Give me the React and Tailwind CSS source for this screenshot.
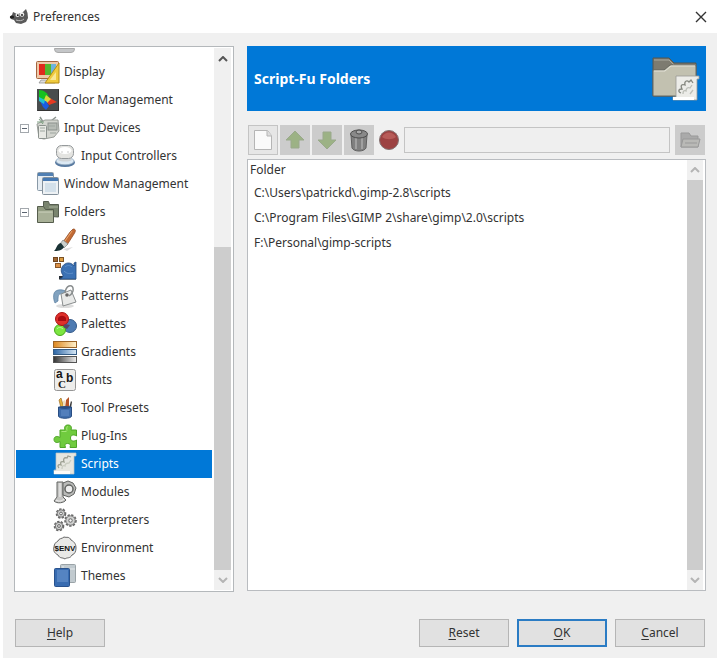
import React from "react";

function Svg({ size = 24, children, className = "" }) {
  return (
    <svg width={size} height={size} viewBox="0 0 24 24" className={`shrink-0 ${className}`} fill="none" aria-hidden="true">
      {children}
    </svg>
  );
}

const Wilber = () => (
  <svg width="20" height="18" viewBox="0 0 20 18" className="shrink-0" aria-hidden="true">
    <path d="M4 4l4 2 5-1 4-4 1.500 4 .5 5-2 4-5 2-5-1-2-3-3-1-1-2 2-2z" fill="#5a5a5a" />
    <circle cx="8.500" cy="7" r="2" fill="#eee" />
    <circle cx="13" cy="6.500" r="2.200" fill="#eee" />
    <circle cx="8.800" cy="7.200" r="0.900" fill="#111" />
    <circle cx="13" cy="7" r="0.900" fill="#111" />
    <ellipse cx="3" cy="9" rx="2.200" ry="1.600" fill="#222" />
    <path d="M7 12c3 1 6 1 8-1" stroke="#bbb" fill="none" />
  </svg>
);

const DisplayIcon = () => (
  <Svg>
    <path d="M5 20h12l2 3H3z" fill="#ddd" stroke="#888" strokeWidth="0.700" />
    <rect x="0.500" y="1.500" width="22" height="17" rx="1" fill="#eec9a8" stroke="#a5653f" />
    <rect x="3" y="4" width="6" height="11" fill="#e02a1c" />
    <rect x="9" y="4" width="6" height="11" fill="#54b82e" />
    <rect x="15" y="4" width="5" height="11" fill="#6db4dd" />
    <path d="M23 3v20H9z" fill="#efcb3e" stroke="#b48b16" />
    <path d="M20 12v8h-6z" fill="#f9e797" />
  </Svg>
);

const ColorIcon = () => (
  <Svg>
    <rect x="1" y="1" width="22" height="22" fill="#494d4e" />
    <path d="M3 2c5 0 9 3 10 8l-4 4-6-2z" fill="#16c11f" />
    <path d="M12 9l9 5-8 3-3-4z" fill="#e63b22" />
    <path d="M10 7l5 4-4 4-3-3z" fill="#d8d83c" />
    <path d="M4 13l6 0 3 5-3 4-3-3z" fill="#1c5ce0" />
    <path d="M3 9l6 3-1 4-5-3z" fill="#22c3cf" />
    <path d="M1.500 22.500h21v-21" stroke="#333" />
  </Svg>
);

const DevicesIcon = () => (
  <Svg>
    <path d="M7 6L4 1M15 5l5-4" stroke="#8c9590" strokeWidth="1.500" />
    <path d="M1 8l8-4h13l1 11-5 6-10 2-5-1z" fill="#d3d5cf" stroke="#999d98" />
    <rect x="2.500" y="9.500" width="8" height="13" rx="1" fill="#e8e9e4" stroke="#8b918d" />
    <rect x="12" y="7" width="9" height="7" fill="#b6bbb5" stroke="#8b918d" />
    <path d="M4 12h5M4 15h5M14 17h6M13 10h6" stroke="#9da59f" />
    <path d="M1 6h7M3 3l4 5" stroke="#7fa082" />
  </Svg>
);

const ControllerIcon = () => (
  <Svg>
    <ellipse cx="12" cy="18.500" rx="10" ry="4.500" fill="#56789f" />
    <ellipse cx="12" cy="17" rx="9" ry="3.800" fill="#dce9f4" stroke="#91a8bd" strokeWidth="0.700" />
    <path d="M7 12h10l2 4c-3 2-11 2-14 0z" fill="#d1d5d8" />
    <rect x="3.500" y="1.500" width="17" height="13" rx="5" fill="#e4e4e1" stroke="#969a9c" />
    <ellipse cx="12" cy="6.500" rx="6.500" ry="3.500" fill="#fff" />
    <path d="M8 8h2M14 8h2" stroke="#c9c9c9" />
  </Svg>
);

const WindowsIcon = () => (
  <Svg>
    <rect x="1.500" y="0.500" width="16" height="18" rx="1" fill="#e6edf3" stroke="#8999a7" />
    <rect x="2" y="1" width="15" height="3" fill="#5180b3" />
    <rect x="6.500" y="5.500" width="16" height="17" rx="1" fill="#edf1f4" stroke="#84919c" />
    <rect x="7" y="6" width="15" height="3" fill="#4679b2" />
    <path d="M9 11h11v9H9z" fill="#d3e0ea" />
  </Svg>
);

const FoldersIcon = () => (
  <Svg>
    <path d="M7.500 16V1.500h5l1 3h9V17z" fill="#79846e" stroke="#555d50" />
    <path d="M13 7h9" stroke="#aab29e" />
    <path d="M1.500 22.500v-16h6l2 3h8v13z" fill="#929c82" stroke="#555d4d" />
    <path d="M2 11.500h15v10.500H2z" fill="#a8b097" />
    <path d="M2.500 12h14" stroke="#cdd3bf" />
  </Svg>
);

const BrushIcon = () => (
  <Svg>
    <path d="M10 21l10-2-6 4z" fill="#ddd" />
    <path d="M20 1c3 0 3 2 1 5l-7 11-4-3 7-10z" fill="#c26b35" stroke="#8c451e" strokeWidth="0.700" />
    <path d="M19 3l-7 10" stroke="#eda76d" />
    <path d="M10 12l5 4-4 4-4-4z" fill="#c9cfcc" stroke="#818784" strokeWidth="0.700" />
    <path d="M8 15l3 4c-2 4-7 4-10 4 3-2 2-7 7-8z" fill="#193235" />
  </Svg>
);

const DynamicsIcon = () => (
  <Svg>
    <path d="M6 20h17v3.500H6z" fill="#252c35" />
    <path d="M21 7l2-1v17H7c2-1 3-2 3-4-3-3-2-9 2-11 3-2 7-1 9 2z" fill="#3b71b4" stroke="#254b80" strokeWidth="0.800" />
    <path d="M12 11c2-2 5-2 7 0M11 15c3 3 6 3 9 2" stroke="#5f90ca" />
    <rect x="0.500" y="1.500" width="4" height="4" fill="#9e6632" stroke="#6f4520" />
    <rect x="6.500" y="1.500" width="4" height="4" fill="#dc9d42" stroke="#795225" />
    <rect x="2.500" y="7.500" width="5" height="4" fill="#dc9147" stroke="#88572a" />
  </Svg>
);

const PatternIcon = () => (
  <Svg>
    <ellipse cx="12" cy="22" rx="9" ry="2" fill="#ddd" />
    <path d="M2 19C0 15 0 8 3 7c3-2 7-1 10 0l-4 3c-4-1-4 3-4 7z" fill="#81a2bf" stroke="#577d9f" strokeWidth="0.700" />
    <path d="M8 10l10-4 5 12-13 4z" fill="#e8e9e8" stroke="#898d8e" />
    <path d="M12 9c1-8 7-9 8-5s-1 6-4 8" stroke="#898d8e" strokeWidth="1.500" />
    <circle cx="14" cy="11" r="1.800" fill="#666" />
  </Svg>
);

const PaletteIcon = () => (
  <Svg>
    <circle cx="17" cy="14" r="6.500" fill="#4e7bb2" stroke="#355b8b" />
    <circle cx="7" cy="18" r="5.500" fill="#7ce641" stroke="#48a71c" />
    <circle cx="9" cy="7" r="6.500" fill="#df302b" stroke="#a91414" />
    <path d="M5 6c2-3 6-3 8 0v3H5z" fill="#a90c12" />
    <path d="M12 12l5 1-3 4-4-2z" fill="#574569" />
    <path d="M4 17c1-2 4-2 6 0" stroke="#c2f5a0" />
  </Svg>
);

const GradientIcon = () => (
  <Svg>
    <defs>
      <linearGradient id="g-orange"><stop stopColor="#dc861e" /><stop offset="1" stopColor="#fff2ce" /></linearGradient>
      <linearGradient id="g-blue"><stop stopColor="#2b65a5" /><stop offset="1" stopColor="#d9e9f6" /></linearGradient>
      <linearGradient id="g-gray"><stop stopColor="#333" /><stop offset="1" stopColor="#eee" /></linearGradient>
    </defs>
    <rect x="0.500" y="1.500" width="23" height="6" fill="url(#g-orange)" stroke="#9b6427" />
    <rect x="0.500" y="9.500" width="23" height="5" fill="url(#g-blue)" stroke="#355d86" />
    <rect x="0.500" y="16.500" width="23" height="6" fill="url(#g-gray)" stroke="#555" />
  </Svg>
);

const FontIcon = () => (
  <Svg>
    <rect x="1.500" y="1.500" width="21" height="21" rx="2" fill="#ededeb" stroke="#969696" />
    <text x="3" y="10" fontSize="12" fontWeight="700" fontFamily="Liberation Sans" fill="#151515">
      a
      <tspan x="13" y="14">b</tspan>
      <tspan x="5" y="20" fontSize="11" fontFamily="Liberation Serif">C</tspan>
    </text>
  </Svg>
);

const ToolIcon = () => (
  <Svg>
    <path d="M8 12L6 4l2-2 3 10z" fill="#e4b23d" stroke="#9f6b24" strokeWidth="0.700" />
    <path d="M12 12l1-8 3-3v11z" fill="#b55427" />
    <path d="M10 12V5l2-1v8z" fill="#efe2be" />
    <path d="M16 12l2-7 1 1-1 6z" fill="#3c3c3c" />
    <path d="M5.500 11h13v9c0 3-13 3-13 0z" fill="#406eac" stroke="#294e83" />
    <path d="M8 14v6h8v-6z" fill="#537fbb" />
    <ellipse cx="12" cy="11.500" rx="6" ry="1.500" fill="#294e83" />
  </Svg>
);

const PluginIcon = () => (
  <Svg>
    <path
      d="M7 6h5c-1-3 0-5 3-5s4 2 3 5h5.500v6c-3-2-6-1-6 2s3 4 6 2v7.500H17c1-3 0-4-2.500-4s-3 1-2 4H7v-6c-3 2-6 1-6-2s3-4 6-2z"
      fill="#70cb3e"
      stroke="#4fa528"
    />
    <path d="M8.500 7.500h5M15 2.500c-1.500 0-1.500 2-1 4" stroke="#a5e778" />
  </Svg>
);

const ScriptIcon = () => (
  <Svg>
    <path d="M3 1h20v3h-2v18H1v-4h2z" fill="#e6e6df" stroke="#bdc3c3" strokeWidth="0.700" />
    <path d="M1 19h16v3H1z" fill="#fbfbf8" />
    <path d="M6 16c-2-2-1-4 2-3-1-3 0-4 3-3-1-3 0-5 3-4l1-2 3 1" stroke="#9b9e90" strokeWidth="1.300" />
    <path d="M9 17c0-3 1-4 3-3 0-3 2-3 4-3l2-3" stroke="#c9ccc0" strokeWidth="1.300" />
  </Svg>
);

const ModuleIcon = () => (
  <Svg>
    <path d="M4 2h6v15l3 3c-2 3-9 4-12 1l3-4z" fill="#c5c5c3" stroke="#626462" />
    <path d="M10 3l5-2 5 2 3 5-2 6-5 3-6-2z" fill="#b9bab8" stroke="#626462" />
    <circle cx="16" cy="9" r="4" fill="#eee" stroke="#626462" strokeWidth="1.500" />
    <path d="M7 3v14M3 20c3 2 6 1 8-1" stroke="#f3f3f3" />
  </Svg>
);

function Gear({ cx, cy, r }) {
  return (
    <g>
      <circle cx={cx} cy={cy} r={r} stroke="#666" strokeWidth="2.200" strokeDasharray="2.200 1.300" />
      <circle cx={cx} cy={cy} r={r - 0.5} fill="#cfd0cf" stroke="#777" />
      <circle cx={cx} cy={cy} r={r / 3} fill="#f8f8f8" stroke="#666" />
    </g>
  );
}

const InterpreterIcon = () => (
  <Svg>
    <Gear cx={8} cy={5.5} r={4.2} />
    <Gear cx={6} cy={18} r={4.2} />
    <Gear cx={17.5} cy={12.5} r={5.2} />
  </Svg>
);

const EnvironmentIcon = () => (
  <Svg>
    <path d="M5 5c1-3 4-2 6-4 3 1 5-1 7 3 4 2 5 5 5 8s-1 6-4 7c-2 4-5 2-7 4-3-2-5 0-7-4-4-2-5-5-4-8 0-3 2-5 4-6z" fill="#e9e9e7" stroke="#666" />
    <text x="12" y="15" textAnchor="middle" fontSize="8" fontWeight="700" fontFamily="Liberation Sans" fill="#111">$ENV</text>
  </Svg>
);

const ThemeIcon = () => (
  <Svg>
    <rect x="7.500" y="0.500" width="15" height="18" rx="1" fill="#c1cacf" stroke="#9aa3a7" />
    <path d="M10 2v3h12" stroke="#e4e8ea" />
    <rect x="1.500" y="4.500" width="15" height="18" rx="1" fill="#386cb1" stroke="#29528d" />
    <rect x="4" y="6" width="11" height="12" fill="#5584c2" />
  </Svg>
);

const tree = [
  { label: "Display", Icon: DisplayIcon },
  { label: "Color Management", Icon: ColorIcon },
  { label: "Input Devices", Icon: DevicesIcon, open: true },
  { label: "Input Controllers", Icon: ControllerIcon, child: true },
  { label: "Window Management", Icon: WindowsIcon },
  { label: "Folders", Icon: FoldersIcon, open: true },
  { label: "Brushes", Icon: BrushIcon, child: true },
  { label: "Dynamics", Icon: DynamicsIcon, child: true },
  { label: "Patterns", Icon: PatternIcon, child: true },
  { label: "Palettes", Icon: PaletteIcon, child: true },
  { label: "Gradients", Icon: GradientIcon, child: true },
  { label: "Fonts", Icon: FontIcon, child: true },
  { label: "Tool Presets", Icon: ToolIcon, child: true },
  { label: "Plug-Ins", Icon: PluginIcon, child: true },
  { label: "Scripts", Icon: ScriptIcon, child: true, selected: true },
  { label: "Modules", Icon: ModuleIcon, child: true },
  { label: "Interpreters", Icon: InterpreterIcon, child: true },
  { label: "Environment", Icon: EnvironmentIcon, child: true },
  { label: "Themes", Icon: ThemeIcon, child: true },
];

const folders = [
  "C:\\Users\\patrickd\\.gimp-2.8\\scripts",
  "C:\\Program Files\\GIMP 2\\share\\gimp\\2.0\\scripts",
  "F:\\Personal\\gimp-scripts",
];

function TreeRow({ label, Icon, child, open, selected }) {
  return (
    <li
      role="treeitem"
      aria-selected={!!selected}
      className={`flex h-7 shrink-0 items-center pl-1 ${selected ? "bg-[#0078d7] text-white" : ""}`}
    >
      <span className={`flex shrink-0 ${child ? "w-[33px]" : "w-4"}`}>
        {open && (
          <button aria-label={`Collapse ${label}`} className="flex size-[9px] items-center justify-center border border-[#a3a8ad] bg-white">
            <span className="h-px w-[5px] bg-[#5b6470]" />
          </button>
        )}
      </span>
      <Icon />
      <span className="ml-1 whitespace-nowrap">{label}</span>
    </li>
  );
}

function Arrow({ down, dark }) {
  return (
    <svg width="10" height="6" viewBox="0 0 10 6" fill="none" aria-hidden="true">
      <path d={down ? "M1 1l4 4 4-4" : "M1 5l4-4 4 4"} stroke={dark ? "#555" : "#b4b4b4"} strokeWidth="2" />
    </svg>
  );
}

function ToolButton({ label, raised, children }) {
  return (
    <button
      aria-label={label}
      className={`flex size-[30px] shrink-0 items-center justify-center border ${raised ? "border-[#c4c4c4] bg-[#e6e6e6]" : "border-[#cccccc] bg-[#cccccc]"}`}
    >
      {children}
    </button>
  );
}

function DialogButton({ text, primary }) {
  return (
    <button
      className={`h-7 w-[90px] bg-[#e1e1e1] ${primary ? "border-2 border-[#2b7cc4]" : "border border-[#b5b5b5]"}`}
    >
      <span className="underline underline-offset-2">{text[0]}</span>
      {text.slice(1)}
    </button>
  );
}

export default function App() {
  return (
    <div className="flex h-screen flex-col bg-white px-[3px] pb-[3px] font-['Noto_Sans','Open_Sans',sans-serif] text-[12px] leading-4 text-[#333]">
      <header className="flex h-[33px] shrink-0 items-center pr-2 pl-[6px]">
        <Wilber />
        <h1 className="ml-1 flex-1">Preferences</h1>
        <button aria-label="Close" className="flex size-4 items-center justify-center">
          <svg width="12" height="12" viewBox="0 0 12 12" aria-hidden="true">
            <path d="M1 1l10 10M11 1L1 11" stroke="#333" strokeWidth="1.400" />
          </svg>
        </button>
      </header>

      <main className="flex min-h-0 flex-1 flex-col bg-[#f0f0f0] pt-[13px] pr-[11px] pb-[11px] pl-[11px]">
        <div className="flex min-h-0 flex-1 gap-[13px]">
          <nav className="flex w-[220px] shrink-0 border border-[#b4b8bb] bg-white p-px pr-[2px]">
            <ul role="tree" className="mr-[2px] flex min-h-0 flex-1 flex-col justify-end overflow-hidden">
              <li role="presentation" className="flex min-h-0 flex-1 items-start pl-[38px]">
                <span className="h-[5px] w-[21px] rounded-b-sm border border-[#aaa] bg-[#c4c6c8]" />
              </li>
              {tree.map((item) => (
                <TreeRow key={item.label} {...item} />
              ))}
            </ul>
            <div className="flex w-[17px] flex-col bg-[#f0f0f0]">
              <span className="flex h-[22px] items-center justify-center"><Arrow dark /></span>
              <span className="flex-[178]" />
              <span className="flex-[324] bg-[#cdcdcd]" />
              <span className="flex h-[20px] items-center justify-center"><Arrow down /></span>
            </div>
          </nav>

          <section className="flex min-w-0 flex-1 flex-col">
            <div className="flex h-[65px] shrink-0 items-center justify-between bg-[#0078d7] pr-[6px] pl-[7px] text-white">
              <h2 className="text-[14px] font-bold">Script-Fu Folders</h2>
              <svg width="48" height="48" viewBox="0 0 48 48" fill="none" aria-hidden="true">
                <path d="M1 41V3h16l5 5h22v33z" fill="#7d7b70" stroke="#55564f" />
                <path d="M2 5h15l5 5h22" stroke="#aaa99e" />
                <path d="M1 41V15h11l6-5h26v31z" fill="#c2c1b0" stroke="#686960" />
                <path d="M2 16h11l6-5h24" stroke="#e3e2d7" />
                <path d="M24 21h23v3h-2v21H21v-3h3z" fill="#ecece8" stroke="#9b9b96" strokeWidth="0.800" />
                <path d="M21 42h21v3H21z" fill="#fff" />
                <path d="M29 38c-3-1-3-4 1-4-2-4 0-5 3-4-1-4 2-5 4-3l2-2 2 3" stroke="#85877f" strokeWidth="1.300" />
                <path d="M31 39c0-3 1-4 3-3 0-3 2-4 4-3l2-3M38 39l3-4" stroke="#bdbfb8" strokeWidth="1.300" />
              </svg>
            </div>

            <div className="mt-[14px] flex h-[30px] shrink-0 items-center gap-[2px] pr-px pl-px">
              <ToolButton label="New folder" raised>
                <Svg>
                  <path d="M3.500 2.500h13l4 5v14h-17z" fill="#fafafa" stroke="#b5b5b5" />
                  <path d="M16 3v5h5" fill="#ddd" stroke="#b5b5b5" />
                </Svg>
              </ToolButton>
              <ToolButton label="Move up">
                <Svg>
                  <path d="M12 3l9 9h-5v8H8v-8H3z" fill="#9cb285" stroke="#9aa98c" />
                </Svg>
              </ToolButton>
              <ToolButton label="Move down">
                <Svg>
                  <path d="M12 21l9-9h-5V4H8v8H3z" fill="#9cb285" stroke="#9aa98c" />
                </Svg>
              </ToolButton>
              <ToolButton label="Delete">
                <Svg>
                  <path d="M4 7l1 13c2 4 12 4 14 0l1-13z" fill="#808080" stroke="#606060" />
                  <path d="M9 10v11M15 10v11" stroke="#a0a0a0" strokeWidth="2" />
                  <ellipse cx="12" cy="6" rx="8.500" ry="4" fill="#898989" stroke="#4d4d4d" />
                  <ellipse cx="12" cy="4" rx="3" ry="2" fill="#aaa" stroke="#4d4d4d" />
                </Svg>
              </ToolButton>
              <Svg className="mx-px">
                <circle cx="12" cy="12" r="9.500" fill="#9c4141" stroke="#847171" />
                <path d="M5 9c3-6 11-6 14 0-4 3-10 3-14 0z" fill="#b75b58" />
              </Svg>
              <input aria-label="Folder path" className="mr-[3px] h-[26px] min-w-0 flex-1 border border-[#c4c4c4] bg-[#efefef] px-2" />
              <ToolButton label="Browse">
                <Svg>
                  <path d="M3 19V5h8l2 3h7v11z" fill="#aaa" stroke="#999" />
                  <path d="M3 19l2-8h17l-2 8z" fill="#b9b9b6" stroke="#999" />
                  <path d="M7 15h12" stroke="#999" />
                </Svg>
              </ToolButton>
            </div>

            <div className="mt-1 mb-px flex min-h-0 flex-1 border border-[#b9bcc0] bg-white pr-[2px]">
              <table className="w-full self-start text-left">
                <thead>
                  <tr className="h-5"><th className="pl-[2px] font-normal">Folder</th></tr>
                </thead>
                <tbody>
                  {folders.map((path) => (
                    <tr key={path} className="h-[25px]"><td className="pl-[6px]">{path}</td></tr>
                  ))}
                </tbody>
              </table>
              <div className="flex w-4 shrink-0 flex-col bg-[#f0f0f0]">
                <span className="flex h-5 items-center justify-center"><Arrow /></span>
                <span className="flex-1 bg-[#cdcdcd]" />
                <span className="flex h-5 items-center justify-center"><Arrow down /></span>
              </div>
            </div>
          </section>
        </div>

        <footer className="mt-[27px] flex shrink-0 gap-2 px-px">
          <DialogButton text="Help" />
          <span className="flex-1" />
          <DialogButton text="Reset" />
          <DialogButton text="OK" primary />
          <DialogButton text="Cancel" />
        </footer>
      </main>
    </div>
  );
}
